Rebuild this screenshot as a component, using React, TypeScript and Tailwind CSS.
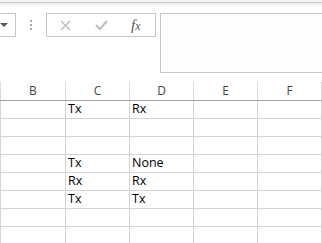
import React from "react";

const cols = ["B", "C", "D", "E", "F"];
const rows: string[][] = [
  ["", "Tx", "Rx", "", ""],
  ["", "", "", "", ""],
  ["", "", "", "", ""],
  ["", "Tx", "None", "", ""],
  ["", "Rx", "Rx", "", ""],
  ["", "Tx", "Tx", "", ""],
  ["", "", "", "", ""],
  ["", "", "", "", ""],
  ["", "", "", "", ""],
];

export default function App() {
  return (
    <div
      className="w-[322px] h-[243px] overflow-hidden bg-white relative"
      style={{ fontFamily: '"Open Sans", "Noto Sans", sans-serif' }}
    >
      {/* top shadow band */}
      <div className="h-[2px] bg-[#f1f1f1]" />
      <div className="h-[1px] bg-[#cfcfcf]" />
      <div className="h-[4px] bg-gradient-to-b from-[#e9e9e9] to-white" />

      {/* formula bar */}
      <div className="flex items-start pt-[6px] h-[75px]">
        {/* name box */}
        <div className="w-[40px] -ml-[24px] h-[24px] border border-[#c6c6c6] bg-white flex items-center justify-end pr-[7px] shrink-0">
          <div className="w-0 h-0 border-l-[4px] border-r-[4px] border-t-[4px] border-l-transparent border-r-transparent border-t-[#555]" />
        </div>
        {/* dots */}
        <div className="ml-[14px] w-[2px] h-[24px] flex flex-col items-center justify-center gap-[2px] shrink-0">
          <div className="w-[2px] h-[2px] bg-[#a8a8a8]" />
          <div className="w-[2px] h-[2px] bg-[#a8a8a8]" />
          <div className="w-[2px] h-[2px] bg-[#a8a8a8]" />
        </div>
        {/* buttons box */}
        <div className="ml-[14px] w-[110px] h-[24px] border border-[#c6c6c6] bg-white flex items-center shrink-0">
          <svg className="ml-[13px]" width="11" height="11" viewBox="0 0 11 11">
            <path d="M1 1 L10 10 M10 1 L1 10" stroke="#b9b9b9" strokeWidth="1.3" fill="none" />
          </svg>
          <svg className="ml-[24px]" width="13" height="10" viewBox="0 0 13 10">
            <path d="M1 5 L5 9 L12 1" stroke="#bdbdbd" strokeWidth="2" fill="none" />
          </svg>
          <div
            className="ml-[23px] text-[#555] italic leading-none flex items-baseline"
            style={{ fontFamily: '"Liberation Serif", "DejaVu Serif", serif' }}
          >
            <span className="text-[15px]">f</span>
            <span className="text-[12px]">x</span>
          </div>
        </div>
        {/* formula input */}
        <div className="ml-[4px] flex-1 h-[60px] border border-[#c6c6c6] bg-[#fdfdfd] -mr-[10px]" />
      </div>

      {/* column headers */}
      <div className="flex h-[19px] border-b border-[#a5a5a5] text-[12px] text-[#444]">
        <div className="w-[1px] h-full bg-[#dadada] shrink-0" />
        {cols.map((c, i) => (
          <div
            key={c}
            className={`${i === 0 ? "w-[65px]" : "w-[64px]"} h-full border-r border-[#dadada] flex items-center justify-center shrink-0`}
          >
            {c}
          </div>
        ))}
      </div>

      {/* grid */}
      {rows.map((r, ri) => (
        <div key={ri} className="flex h-[18px] border-b border-[#d4d4d4] text-[12.5px] text-black">
          <div className="w-[1px] h-full bg-[#d4d4d4] shrink-0" />
          {r.map((v, ci) => (
            <div
              key={ci}
              className={`${ci === 0 ? "w-[65px]" : "w-[64px]"} h-full border-r border-[#d4d4d4] flex items-center pl-[2px] shrink-0 leading-none`}
            >
              {v}
            </div>
          ))}
        </div>
      ))}
    </div>
  );
}
